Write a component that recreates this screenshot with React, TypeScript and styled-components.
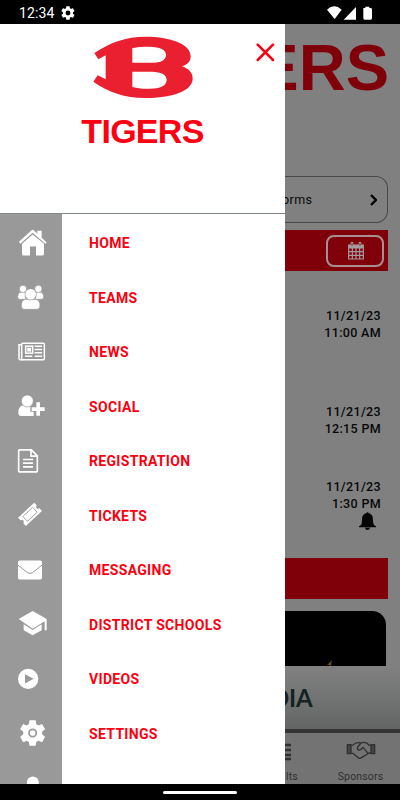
import React from 'react';
import styled, { createGlobalStyle } from 'styled-components';

const GlobalStyle = createGlobalStyle`
  * { box-sizing: border-box; }
  body { margin: 0; background: #000; font-family: Roboto, sans-serif; }
  svg { display: block; flex: none; }
`;

const Screen = styled.div`
  width: 400px; height: 800px; overflow: hidden; background: #000;
  display: grid; grid-template-rows: 24px 760px 16px;
`;
const StatusBar = styled.header`
  display: flex; align-items: center; padding: 1px 27px 0 19px; color: #fff;
`;
const Clock = styled.span`font-size: 14px; letter-spacing: 0.1px; line-height: 22px; width: 42px;`;
const StatusIcons = styled.div`margin-left: auto;`;
const Content = styled.main`display: flex; overflow: hidden;`;

const Drawer = styled.aside`
  width: 285px; flex: none; background: #fff; overflow: hidden;
  display: flex; flex-direction: column;
`;
const DrawerHeader = styled.div`
  height: 190px; flex: none; border-bottom: 1px solid #808884;
  display: grid; grid-template-columns: 1fr 124px 1fr; align-items: start;
`;
const Brand = styled.div`
  grid-column: 2; padding-top: 12px;
  display: flex; flex-direction: column; align-items: center;
`;
const BrandName = styled.div`
  margin-top: 13px; font: bold 34px/38px "Liberation Sans", sans-serif;
  letter-spacing: -0.7px; color: #fe0012;
`;
const CloseButton = styled.button`
  justify-self: end; margin: 19px 10px 0 0; padding: 0; border: 0; background: none;
`;
const Menu = styled.nav`
  flex: none; background: linear-gradient(to right, #999 62px, #fff 62px);
  padding-top: 1.5px;
`;
const MenuItem = styled.a`
  height: 54.5px; display: flex; align-items: center; gap: 27px;
  color: #fb0010; font-size: 14px; font-weight: 700; white-space: nowrap;
`;
const Label = styled.span`letter-spacing: 0.32px; padding-top: 0.6px;`;

const Page = styled.section`
  flex: 1; min-width: 0; overflow: hidden; background: #808080; color: #080808;
  display: flex; flex-direction: column;
`;
const Hero = styled.div`
  height: 152px; flex: none; padding: 7px 11px 0 0;
  display: flex; justify-content: flex-end; align-items: flex-start;
  font: bold 65px/74px "Liberation Sans", sans-serif; color: #80000a;
`;
const FormsCard = styled.div`
  height: 47px; flex: none; margin-right: 12px; padding: 0 10px 0 0;
  border: 1px solid #484848; border-left: 0; border-radius: 0 12px 12px 0;
  display: flex; align-items: center; justify-content: space-between; overflow: hidden;
`;
const FormsText = styled.span`font-size: 12.5px; letter-spacing: 0.4px; margin-left: -3px;`;
const Band = styled.div<{ $height: number; $gap?: number }>`
  height: ${p => p.$height}px; flex: none; margin: ${p => p.$gap ?? 0}px 12px 0 0; background: #80000a;
  display: flex; align-items: center; justify-content: flex-end; padding-right: 4px;
`;
const CalendarButton = styled.button`
  width: 58px; height: 32px; padding: 0 0 0 1px; border: 2px solid #a98f91; border-radius: 8px;
  background: none; display: flex; align-items: center; justify-content: center;
`;
const Events = styled.div`height: 287px; flex: none; padding: 36px 19px 0 0; text-align: right;`;
const Event = styled.div<{ $height: number }>`
  height: ${p => p.$height}px; font-size: 12.5px; line-height: 17px; font-weight: 500;
  letter-spacing: 0.33px; display: flex; flex-direction: column; align-items: flex-end;
`;
const BellSlot = styled.div`margin: 0 5px 0 0;`;
const Video = styled.div`
  height: 55px; flex: none; margin: 12px 14px 0 0; background: #000;
  border-radius: 0 14px 0 0; display: flex; align-items: flex-end; padding-left: 42px;
`;
const Sponsor = styled.div`
  height: 67px; flex: none; border-bottom: 4px solid #343434;
  background: linear-gradient(#808080, #747675 45%, #626564);
  font: 700 24px/64px Lato, sans-serif; color: #162222;
  white-space: nowrap; display: flex; overflow: hidden;
`;
const SponsorText = styled.span`margin-left: -14px; letter-spacing: -0.2px;`;
const Tabs = styled.nav`
  flex: 1; background: #737373; color: #303030;
  display: grid; grid-template-columns: 36px 79px; font-size: 10.5px;
`;
const Tab = styled.a<{ $start?: boolean }>`
  padding-top: 5px; display: flex; flex-direction: column; overflow: hidden;
  align-items: ${p => (p.$start ? 'flex-start' : 'center')};
`;
const TabLabel = styled.span<{ $shift?: number }>`
  margin-top: 6px; line-height: 16px; letter-spacing: 0.15px; margin-left: ${p => p.$shift ?? 0}px;
`;
const NavBar = styled.footer`display: flex; align-items: center; justify-content: center;`;
const HomeHandle = styled.div`width: 74px; height: 3px; border-radius: 2px; background: #fff;`;

const gearPath =
  'M19.4 13a7.8 7.8 0 0 0 0-2l2.1-1.7c.2-.1.3-.4.1-.6l-2-3.5c-.1-.2-.4-.3-.6-.2l-2.5 1c-.5-.4-1.1-.7-1.7-1l-.4-2.6c0-.3-.2-.4-.5-.4h-4c-.2 0-.4.1-.5.4L9 5c-.6.3-1.1.6-1.7 1L4.9 5c-.3-.1-.5 0-.7.2l-2 3.5c-.1.2 0 .4.2.6L4.6 11a7.8 7.8 0 0 0 0 2l-2.2 1.7c-.2.1-.2.4-.1.6l2 3.5c.1.2.4.3.6.2l2.5-1c.5.4 1 .7 1.6 1l.4 2.6c0 .3.3.4.5.4h4c.3 0 .5-.1.5-.4l.4-2.6c.6-.3 1.2-.6 1.7-1l2.5 1c.2.1.5 0 .6-.2l2-3.5c.1-.2.1-.4-.1-.6z';

const Logo = () => (
  <svg width="100" height="63" viewBox="278 108 300 189">
    <path fill="#ea2030" fillRule="evenodd" d="M282 159C328 128 377 110 435 110C515 110 571 134 571 168C571 184 562 194 544 199C564 205 577 217 577 236C577 273 514 294 435 294C373 294 324 276 279 245L292 226L316 238V166L294 178ZM396 144C420 140 431 140 447 140C479 141 497 149 497 164C497 180 482 188 455 188H396ZM396 215H455C483 216 499 224 499 239C499 257 480 266 448 266C431 267 414 266 396 261Z" />
  </svg>
);

type IconSpec = { top: number; art: React.ReactNode };
const icons: Record<string, IconSpec> = {
  home: { top: 46.5, art: <><path d="M57 124L94 90Q98 86 102 90L112 99V91H125V112L140 126L136 130L98 97L61 130Z"/><path d="M66 130L98 102L132 130V160Q132 165 127 165H108V138H90V165H70Q66 165 66 160Z"/></> },
  teams: { top: 210, art: <g stroke="#999" strokeWidth="2"><circle cx="69" cy="267" r="11"/><circle cx="115" cy="267" r="11"/><path d="M60 277H77V298H59Q53 298 53 290Q53 281 60 277ZM107 277H124Q131 281 131 290Q131 298 125 298H107Z"/><path d="M76 298Q64 301 64 317Q64 328 73 328H110Q120 328 120 317Q120 301 107 298Z"/><circle cx="92" cy="283" r="17"/></g> },
  news: { top: -1.5, art: <g fill="none" stroke="#fff" strokeWidth="4.6"><rect x="65" y="53" width="68" height="50" rx="3"/><path d="M65 58H57V98Q57 103 64 103H69"/><rect x="77" y="62" width="21" height="21"/><path d="M104 62H126M104 72H126M104 82H126M75 92H97M104 92H126"/><rect x="84" y="69" width="7" height="7" fill="#fff"/></g> },
  social: { top: 162, art: <><path d="M70 241Q55 244 55 261Q54 273 64 273H101V260H91V244Q83 247 70 241Z"/><circle cx="82" cy="228" r="18" stroke="#999" strokeWidth="2"/><path d="M109 232H120V247H134V258H120V272H109V258H95V247H109Z"/></> },
  registration: { top: -4.5, art: <g fill="none" stroke="#fff" strokeWidth="4.8"><path d="M60 43H94L112 61V107Q112 109 110 109H58Q56 109 56 107V45Q56 43 60 43ZM93 44V62H112"/><path d="M69 72H99M69 83H99M69 94H99"/></g> },
  tickets: { top: 159, art: <g transform="translate(90 238) rotate(-43)"><path d="M-33-17H33V-6Q27-4 27 0T33 6V17H-33V6Q-27 4-27 0T-33-6Z"/><rect x="-20" y="-10" width="40" height="20" rx="1" fill="none" stroke="#999" strokeWidth="2.5"/></g> },
  messaging: { top: -7.5, art: <><rect x="54" y="45" width="72" height="57" rx="5"/><path d="M53 58L82 81Q90 87 98 81L127 58" fill="none" stroke="#999" strokeWidth="3"/></> },
  schools: { top: 156, art: <path d="M56 222L98 198L140 222V256H134V229L98 251ZM71 238L98 255L125 238V256L98 271L71 256Z"/> },
  videos: { top: 4.5, art: <><circle cx="84.5" cy="85" r="30.5"/><path d="M75 71V99L101 85Z" fill="#999"/></> },
  settings: { top: 168, art: <><g transform="translate(52.5 203.5) scale(3.8)"><path d={gearPath} /></g><circle cx="98" cy="249" r="11" fill="none" stroke="#999" strokeWidth="5"/></> },
  profile: { top: 331.5, art: <circle cx="98.5" cy="396" r="18"/> },
};

const MenuIcon = ({ name }: { name: string }) => (
  <svg width="62" height="54.5" viewBox={`0 ${icons[name].top} 186 163.5`} fill="#fff">{icons[name].art}</svg>
);

const menu = [
  { icon: 'home', label: 'HOME' },
  { icon: 'teams', label: 'TEAMS' },
  { icon: 'news', label: 'NEWS' },
  { icon: 'social', label: 'SOCIAL' },
  { icon: 'registration', label: 'REGISTRATION' },
  { icon: 'tickets', label: 'TICKETS' },
  { icon: 'messaging', label: 'MESSAGING' },
  { icon: 'schools', label: 'DISTRICT SCHOOLS' },
  { icon: 'videos', label: 'VIDEOS' },
  { icon: 'settings', label: 'SETTINGS' },
  { icon: 'profile', label: '' },
];

const Bell = () => (
  <svg width="17" height="18" viewBox="0 0 51 54">
    <path fill="#060606" d="M22 4Q22 1 25.500 1T29 4C40 6 42 15 42 26C42 36 45 40 51 43V46H0V43C6 40 9 36 9 26C9 15 11 6 22 4ZM18 47H33Q32 54 25.500 54T18 47Z" />
  </svg>
);

export default function App() {
  return (
    <Screen>
      <GlobalStyle />
      <StatusBar>
        <Clock>12:34</Clock>
        <svg width="14" height="14" viewBox="1.500 1.500 21 21" fill="#fff">
          <path fillRule="evenodd" d={gearPath + 'M12 8.300a3.700 3.700 0 1 0 0 7.400a3.700 3.700 0 0 0 0-7.400z'} />
        </svg>
        <StatusIcons>
          <svg width="46" height="14" viewBox="0 0 138 42" fill="#fff">
            <path d="M0 11Q22-9 44 11L23 39ZM50 41L87 3V41ZM109 6H115V2H127V6H130Q135 6 135 10V37Q135 41 131 41H113Q109 41 109 37Z" />
          </svg>
        </StatusIcons>
      </StatusBar>
      <Content>
        <Drawer>
          <DrawerHeader>
            <Brand>
              <Logo />
              <BrandName>TIGERS</BrandName>
            </Brand>
            <CloseButton aria-label="Close menu">
              <svg width="19" height="19" viewBox="0 0 19 19" stroke="#fb0010" strokeWidth="2.500" strokeLinecap="round">
                <path d="M1.700 1.700L17 17M17 1.700L1.700 17" />
              </svg>
            </CloseButton>
          </DrawerHeader>
          <Menu>
            {menu.map(item => (
              <MenuItem key={item.icon}>
                <MenuIcon name={item.icon} />
                <Label>{item.label}</Label>
              </MenuItem>
            ))}
          </Menu>
        </Drawer>
        <Page>
          <Hero>TIGERS</Hero>
          <FormsCard>
            <FormsText>orms</FormsText>
            <svg width="7" height="12" viewBox="0 0 7 12" fill="none" stroke="#050505" strokeWidth="2.400">
              <path d="M1 1L6 6L1 11" />
            </svg>
          </FormsCard>
          <Band $height={41} $gap={7}>
            <CalendarButton aria-label="Calendar">
              <svg width="16" height="18" viewBox="0 0 48 54" fill="none" stroke="#a69b9c" strokeWidth="3.500">
                <path fill="#a69b9c" d="M2 9H46V18H2Z" />
                <path d="M2 18V51H46V18M2 29H46M2 40H46M13 18V51M24 18V51M35 18V51" />
                <path d="M12 3V11M36 3V11" strokeWidth="8" strokeLinecap="round" />
                <path d="M12 4V11M36 4V11" stroke="#80000a" strokeWidth="3" />
              </svg>
            </CalendarButton>
          </Band>
          <Events>
            <Event $height={96}><span>11/21/23</span><span>11:00 AM</span></Event>
            <Event $height={75}><span>11/21/23</span><span>12:15 PM</span></Event>
            <Event $height={60}>
              <span>11/21/23</span><span>1:30 PM</span>
              <BellSlot><Bell /></BellSlot>
            </Event>
          </Events>
          <Band $height={41} />
          <Video>
            <svg width="6" height="6" viewBox="0 0 6 6"><path d="M0 5L5 0L4 6L2 5" fill="#694018" /><path d="M2 4L4 3" stroke="#3d622d" /></svg>
          </Video>
          <Sponsor><SponsorText>DIA</SponsorText></Sponsor>
          <Tabs>
            <Tab $start>
              <svg width="6" height="25" viewBox="0 0 6 25" stroke="#303030" strokeWidth="2.600">
                <path d="M0 7H6M0 12H6M0 17H6M0 21H6" />
              </svg>
              <TabLabel $shift={1}>lts</TabLabel>
            </Tab>
            <Tab>
              <svg width="30" height="25" viewBox="0 0 90 75" fill="none" stroke="#303030" strokeWidth="4" strokeLinejoin="round">
                <path d="M4 20H15V47H4ZM75 20H86V47H75Z" fill="#454545" />
                <path d="M15 22H20Q30 11 45 15Q60 9 70 22H75M15 46H21L35 58Q41 64 48 58L69 45H75M45 15L35 27Q32 33 38 36Q44 38 51 28L66 46" />
              </svg>
              <TabLabel>Sponsors</TabLabel>
            </Tab>
          </Tabs>
        </Page>
      </Content>
      <NavBar><HomeHandle /></NavBar>
    </Screen>
  );
}
